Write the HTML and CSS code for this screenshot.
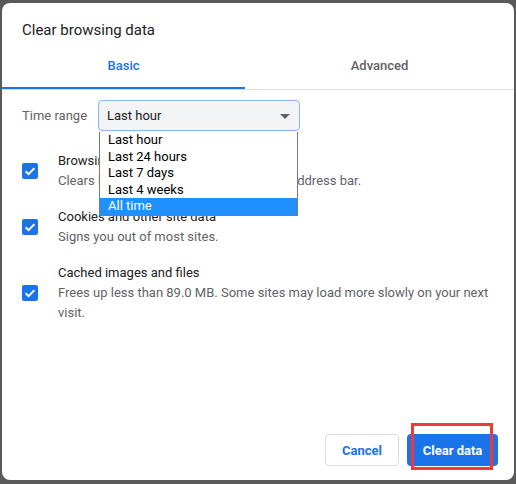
FILE: index.html
```html
<!DOCTYPE html>
<html lang="en">
<head>
  <meta charset="UTF-8">
  <title>Clear browsing data</title>
  <link rel="stylesheet" href="styles.css">
</head>
<body>
  <div class="dialog">
    <div class="title">Clear browsing data</div>
    <div class="tabs">
      <div class="tab on">Basic</div>
      <div class="tab">Advanced</div>
    </div>
    <div class="content">
      <div class="range">
        <span class="range-label">Time range</span>
        <div class="select">
          <span>Last hour</span>
          <span class="caret"></span>
          <ul class="options">
            <li>Last hour</li>
            <li>Last 24 hours</li>
            <li>Last 7 days</li>
            <li>Last 4 weeks</li>
            <li class="picked">All time</li>
          </ul>
        </div>
      </div>
      <div class="item">
        <span class="check"><svg viewBox="0 0 16 16" width="16" height="16"><path d="M3.6 8.3l3 2.9 5.8-6" fill="none" stroke="#fff" stroke-width="1.9"/></svg></span>
        <div class="item-text">
          <div class="item-title">Browsing history</div>
          <div class="item-desc">Clears history and autocompletes in the address bar.</div>
        </div>
      </div>
      <div class="item">
        <span class="check"><svg viewBox="0 0 16 16" width="16" height="16"><path d="M3.6 8.3l3 2.9 5.8-6" fill="none" stroke="#fff" stroke-width="1.9"/></svg></span>
        <div class="item-text">
          <div class="item-title">Cookies and other site data</div>
          <div class="item-desc">Signs you out of most sites.</div>
        </div>
      </div>
      <div class="item">
        <span class="check"><svg viewBox="0 0 16 16" width="16" height="16"><path d="M3.6 8.3l3 2.9 5.8-6" fill="none" stroke="#fff" stroke-width="1.9"/></svg></span>
        <div class="item-text">
          <div class="item-title">Cached images and files</div>
          <div class="item-desc">Frees up less than 89.0 MB. Some sites may load more slowly on your next visit.</div>
        </div>
      </div>
    </div>
    <div class="footer">
      <button class="btn cancel">Cancel</button>
      <button class="btn primary">Clear data</button>
      <span class="mark"></span>
    </div>
  </div>
</body>
</html>
```

FILE: styles.css
```css
html, body{
  margin: 0;
  height: 100%;
}
body{
  background: #595959;
  padding: 3px 2px 0 2px;
  box-sizing: border-box;
  font-family: Roboto, "Liberation Sans", sans-serif;
  font-size: 13px;
  color: #202124;
}
.dialog{
  background: #fff;
  border-radius: 8px;
  height: 477px;
  display: flex;
  flex-direction: column;
}
.title{
  font-size: 15px;
  line-height: 20px;
  padding: 17px 20px 0 20px;
  color: #202124;
}
.tabs{
  display: flex;
  margin-top: 8px;
  border-bottom: 1px solid #dadce0;
}
.tab{
  flex: 1;
  text-align: center;
  font-weight: 500;
  color: #5f6368;
  height: 39px;
  line-height: 36px;
  border-bottom: 2px solid transparent;
}
.tab.on{
  flex: 0 0 243px;
  color: #1a73e8;
  border-bottom-color: #1a73e8;
}
.content{
  flex: 1;
  padding: 10px 20px 0 20px;
}
.range{
  display: flex;
  align-items: center;
}
.range-label{
  color: #5f6368;
  width: 76px;
}
.select{
  position: relative;
  width: 202px;
  height: 31px;
  box-sizing: border-box;
  background: #f1f3f4;
  border: 1px solid #8ab4f8;
  border-radius: 4px;
  display: flex;
  align-items: center;
  padding-left: 8px;
  color: #202124;
}
.caret{
  position: absolute;
  right: 9px;
  top: 13px;
  border-left: 5px solid transparent;
  border-right: 5px solid transparent;
  border-top: 5px solid #5f6368;
}
.options{
  position: absolute;
  left: 0;
  top: 31px;
  width: 199px;
  margin: 0;
  padding: 0;
  list-style: none;
  background: #fff;
  border: 1px solid #7a7a7a;
  border-top: 0;
  box-sizing: border-box;
  z-index: 2;
}
.options li{
  height: 16.6px;
  line-height: 16.6px;
  padding-left: 8px;
  color: #000;
}
.options li.picked{
  background: #1e90ff;
  color: #fff;
}
.item{
  display: flex;
  align-items: center;
  padding: 8px 0;
}
.range + .item{
  margin-top: 12px;
}
.check{
  width: 16px;
  height: 16px;
  border-radius: 2px;
  background: #1a73e8;
  flex: none;
  display: flex;
}
.item-text{
  margin-left: 20px;
  line-height: 20px;
}
.item-desc{
  color: #5f6368;
}
.footer{
  position: relative;
  display: flex;
  justify-content: flex-end;
  gap: 8px;
  padding: 0 16px 14px 0;
}
.btn{
  height: 32px;
  border-radius: 4px;
  font-family: Roboto, "Liberation Sans", sans-serif;
  font-size: 13px;
  font-weight: 700;
  cursor: pointer;
}
.cancel{
  width: 74px;
  background: #fff;
  color: #1a73e8;
  border: 1px solid #dadce0;
}
.primary{
  width: 91px;
  background: #1a73e8;
  color: #fff;
  border: 0;
}
.mark{
  position: absolute;
  left: 409px;
  top: -11px;
  width: 82px;
  height: 47px;
  border: 3px solid #f03a3a;
  box-sizing: border-box;
}
```
